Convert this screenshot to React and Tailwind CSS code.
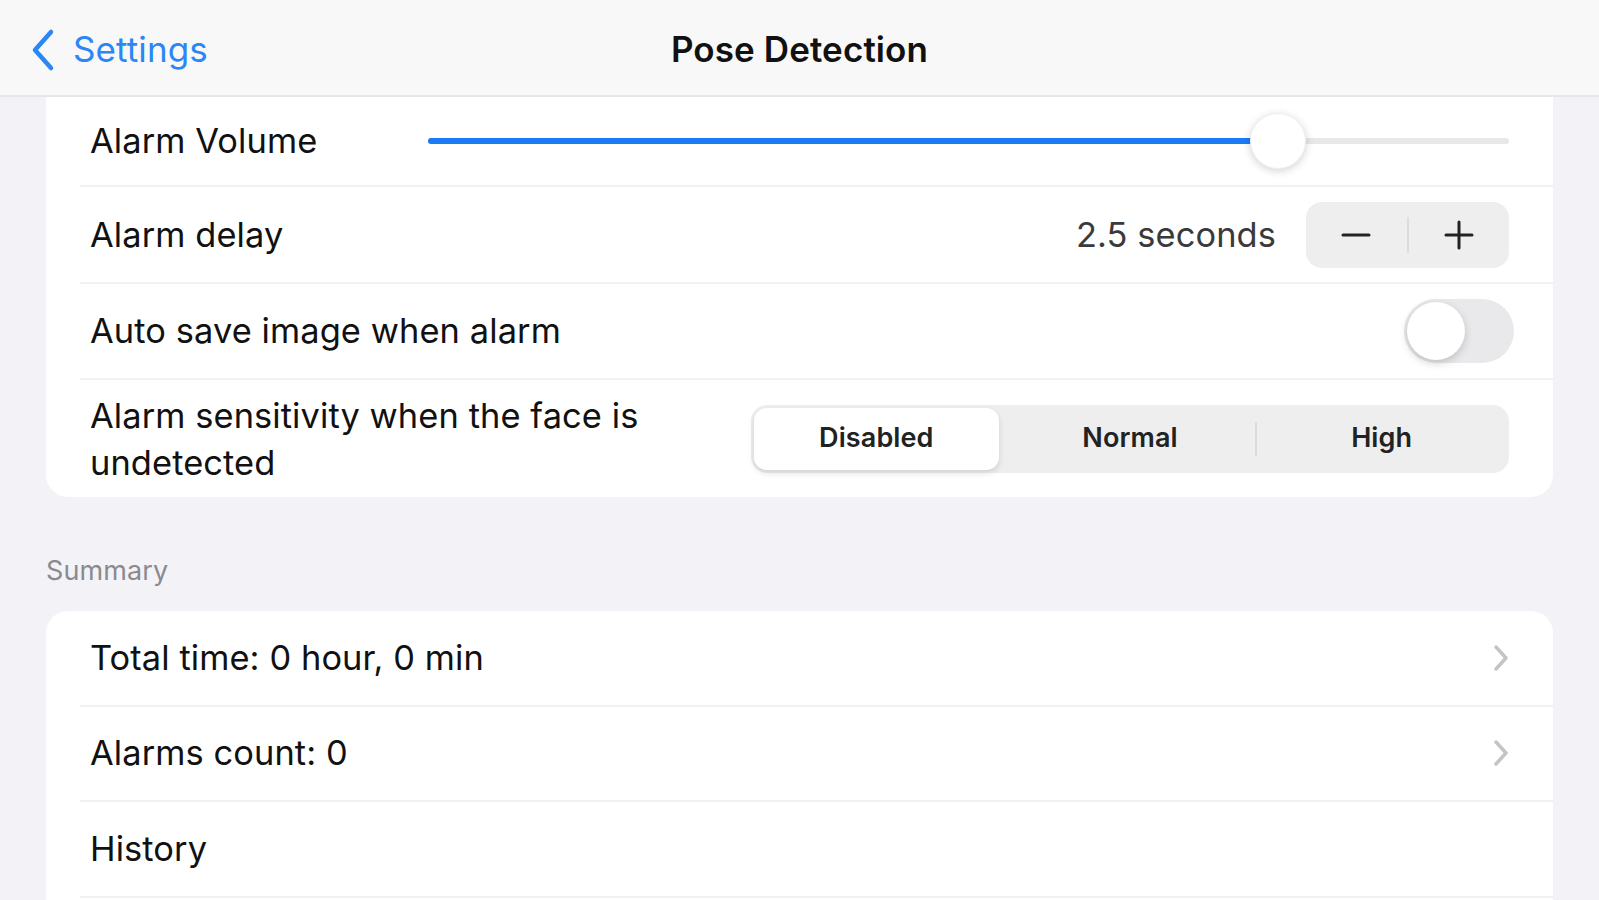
import React from 'react';

function Chevron() {
  return (
    <svg width="16" height="28" viewBox="0 0 16 28" fill="none">
      <path d="M3 3l10 11L3 25" stroke="#c4c4c7" strokeWidth="3.5" strokeLinecap="round" strokeLinejoin="round" />
    </svg>
  );
}

function Row({ children, className = '' }) {
  return (
    <div className={`flex items-center pl-[44px] pr-[44px] ${className}`}>
      {children}
    </div>
  );
}

function Sep() {
  return <div className="ml-[34px] h-[2px] bg-[#f1f1f3]" />;
}

export default function App() {
  return (
    <div
      className="h-[900px] overflow-hidden bg-[#f2f2f7] text-[#111] text-[34.4px] tracking-[0.1px]"
      style={{ fontFamily: 'Inter, "Noto Sans", sans-serif' }}
    >
      <header className="relative flex h-[97px] items-center border-b-2 border-[#e6e6e8] bg-[#f8f8f8] pt-[4px]">
        <div className="flex items-center pl-[30px] text-[#2a87f5]">
          <svg width="26" height="44" viewBox="0 0 26 44" fill="none">
            <path d="M21 4L5 22l16 18" stroke="#2a87f5" strokeWidth="4.5" strokeLinecap="round" strokeLinejoin="round" />
          </svg>
          <span className="ml-[17px] text-[35px]">Settings</span>
        </div>
        <div className="absolute inset-0 flex items-center justify-center pt-[4px] text-[35px] font-semibold text-[#111] pointer-events-none">
          Pose Detection
        </div>
      </header>

      <div className="px-[46px]">
        <section className="rounded-b-[22px] bg-white">
          <Row className="h-[88px]">
            <span className="w-[338px] shrink-0">Alarm Volume</span>
            <div className="relative flex-1 h-[56px] flex items-center">
              <div className="h-[6px] w-full rounded-full bg-[#e8e8ea]" />
              <div className="absolute left-0 top-1/2 -translate-y-1/2 h-[6px] w-[78.6%] rounded-full bg-[#1a7cf5]" />
              <div className="absolute left-[calc(78.6%-28px)] top-0 h-[56px] w-[56px] rounded-full bg-white shadow-[0_2px_8px_rgba(0,0,0,0.18)] border border-[#f0f0f0]" />
            </div>
          </Row>
          <Sep />
          <Row className="h-[95px]">
            <span className="flex-1">Alarm delay</span>
            <span className="mr-[30px] text-[#3a3a3c]">2.5 seconds</span>
            <div className="flex h-[66px] w-[203px] items-center rounded-[16px] bg-[#eeeeef]">
              <div className="flex flex-1 items-center justify-center">
                <svg width="30" height="30" viewBox="0 0 30 30"><path d="M2 15h26" stroke="#222" strokeWidth="3" strokeLinecap="round" /></svg>
              </div>
              <div className="h-[36px] w-[2px] bg-[#dcdcde]" />
              <div className="flex flex-1 items-center justify-center">
                <svg width="30" height="30" viewBox="0 0 30 30"><path d="M2 15h26M15 2v26" stroke="#222" strokeWidth="3" strokeLinecap="round" /></svg>
              </div>
            </div>
          </Row>
          <Sep />
          <Row className="h-[94px]">
            <span className="flex-1">Auto save image when alarm</span>
            <div className="relative -mr-[5px] h-[64px] w-[110px] rounded-full bg-[#e9e9eb]">
              <div className="absolute left-[3px] top-[3px] h-[58px] w-[58px] rounded-full bg-white shadow-[0_3px_8px_rgba(0,0,0,0.18)]" />
            </div>
          </Row>
          <Sep />
          <Row className="h-[117px]">
            <span className="flex-1 leading-[47px]">
              Alarm sensitivity when the face is
              <br />
              undetected
            </span>
            <div className="grid h-[68px] w-[758px] grid-cols-3 items-center rounded-[16px] bg-[#eeeeef] p-[3px] text-[27px] font-semibold text-[#222]">
              <div className="flex h-full items-center justify-center rounded-[13px] bg-white shadow-[0_3px_6px_rgba(0,0,0,0.12)] mr-[6px]">
                Disabled
              </div>
              <div className="flex h-full items-center justify-center">Normal</div>
              <div className="flex h-[34px] items-center justify-center border-l-2 border-[#dcdcde]">High</div>
            </div>
          </Row>
        </section>

        <div className="pt-[54px] pb-[19px] text-[27px] text-[#8a8a8e]">Summary</div>

        <section className="rounded-[22px] bg-white">
          <Row className="h-[94px]">
            <span className="flex-1">Total time: 0 hour, 0 min</span>
            <Chevron />
          </Row>
          <Sep />
          <Row className="h-[93px]">
            <span className="flex-1">Alarms count: 0</span>
            <Chevron />
          </Row>
          <Sep />
          <Row className="h-[94px]">
            <span className="flex-1">History</span>
          </Row>
          <Sep />
          <Row className="h-[94px]">
            <span className="flex-1"></span>
          </Row>
        </section>
      </div>
    </div>
  );
}
